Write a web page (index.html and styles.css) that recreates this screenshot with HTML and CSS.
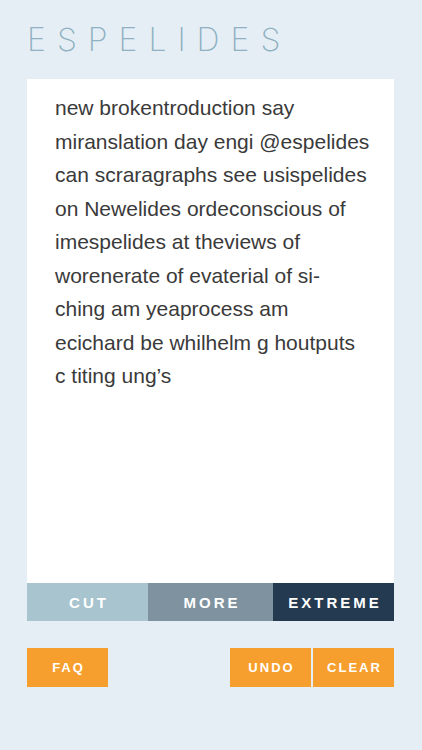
FILE: index.html
```html
<!DOCTYPE html>
<html>
<head>
<meta charset="utf-8">
<link rel="stylesheet" href="styles.css">
</head>
<body>
<div class="app">
  <header class="header">
    <div class="logo">ESPELIDES</div>
  </header>
  <main class="card">
    <p class="text">new brokentroduction say<br>miranslation day engi @espelides<br>can scraragraphs see usispelides<br>on Newelides ordeconscious of<br>imespelides at theviews of<br>worenerate of evaterial of si-<br>ching am yeaprocess am<br>ecichard be whilhelm g houtputs<br>c titing ung’s</p>
  </main>
  <nav class="modes">
    <button class="mode cut">CUT</button>
    <button class="mode more">MORE</button>
    <button class="mode extreme">EXTREME</button>
  </nav>
  <footer class="actions">
    <button class="action">FAQ</button>
    <div class="right">
      <button class="action">UNDO</button>
      <button class="action">CLEAR</button>
    </div>
  </footer>
</div>
</body>
</html>
```
FILE: styles.css
```css
html, body {
  margin: 0;
  padding: 0;
  background: #e6eef5;
}
.app {
  width: 422px;
  height: 750px;
  padding: 0 28px 0 27px;
  box-sizing: border-box;
  display: flex;
  flex-direction: column;
}
.header {
  height: 79px;
  display: flex;
  align-items: flex-start;
}
.logo {
  margin-top: 24px;
  font-family: "Inter", "Liberation Sans", sans-serif;
  font-weight: 200;
  font-size: 32px;
  line-height: 32px;
  letter-spacing: 11px;
  color: #8fb1c1;
}
.card {
  background: #ffffff;
  height: 504px;
  box-sizing: border-box;
  padding: 12px 10px 0 28px;
}
.text {
  margin: 0;
  font-family: "Liberation Sans", Arial, sans-serif;
  font-size: 21px;
  line-height: 33.5px;
  color: #3a3a3a;
  white-space: nowrap;
}
.modes {
  display: flex;
  height: 38px;
}
.mode {
  border: none;
  margin: 0;
  padding: 0;
  color: #ffffff;
  font-family: "Liberation Sans", Arial, sans-serif;
  font-weight: 700;
  font-size: 15px;
  letter-spacing: 3px;
  text-indent: 3px;
}
.cut { width: 121px; background: #a8c5cf; }
.more { width: 125px; background: #7e939f; }
.extreme { width: 121px; background: #243a50; }
.actions {
  margin-top: 27px;
  display: flex;
  justify-content: space-between;
}
.right {
  display: flex;
  gap: 2px;
}
.action {
  width: 81px;
  height: 39px;
  border: none;
  margin: 0;
  padding: 0;
  background: #f79f2e;
  color: #ffffff;
  font-family: "Liberation Sans", Arial, sans-serif;
  font-weight: 700;
  font-size: 13px;
  letter-spacing: 2px;
  text-indent: 2px;
}
```
